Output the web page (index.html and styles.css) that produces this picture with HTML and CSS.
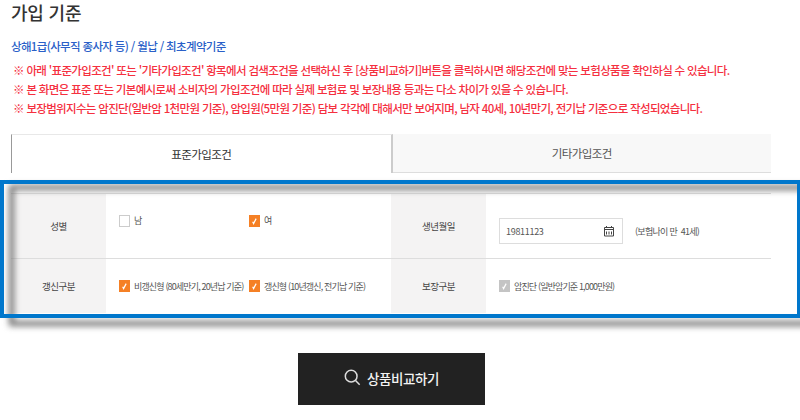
FILE: index.html
```html
<!DOCTYPE html>
<html lang="ko">
<head>
  <meta charset="UTF-8">
  <title>가입 기준</title>
  <link rel="stylesheet" href="styles.css">
</head>
<body>

<div class="page">
  <h2 class="title">가입 기준</h2>
  <p class="subtitle">상해1급(사무직 종사자 등) / 월납 / 최초계약기준</p>

  <ul class="notice">
    <li>※ 아래 '표준가입조건' 또는 '기타가입조건' 항목에서 검색조건을 선택하신 후 [상품비교하기]버튼을 클릭하시면 해당조건에 맞는 보험상품을 확인하실 수 있습니다.</li>
    <li>※ 본 화면은 표준 또는 기본예시로써 소비자의 가입조건에 따라 실제 보험료 및 보장내용 등과는 다소 차이가 있을 수 있습니다.</li>
    <li>※ 보장범위지수는 암진단(일반암 1천만원 기준), 암입원(5만원 기준) 담보 각각에 대해서만 보여지며, 남자 40세, 10년만기, 전기납 기준으로 작성되었습니다.</li>
  </ul>

  <div class="tabs">
    <div class="tab active">표준가입조건</div>
    <div class="tab">기타가입조건</div>
  </div>

  <div class="form">
    <div class="label">성별</div>
    <div class="cell cell-gender">
      <div class="option"><span class="check"></span>남</div>
      <div class="option"><span class="check on"><svg viewBox="0 0 12 12"><path d="M4 6.8 5 8.8 7.8 3.4" /></svg></span>여</div>
    </div>
    <div class="label">생년월일</div>
    <div class="cell cell-date">
      <div class="date-input">
        <span>19811123</span>
        <svg class="calendar" viewBox="0 0 12 12">
          <path d="M1.5 2.5h9v8.5h-9z M1.5 4.5h9 M3.5 1v2 M8.5 1v2" />
          <path d="M3.5 6.5v3 M6 6.5v3 M8.5 6.5v3" />
        </svg>
      </div>
      <span class="age">(보험나이 만&nbsp; 41세)</span>
    </div>

    <div class="label line">갱신구분</div>
    <div class="cell line cell-renew">
      <div class="option"><span class="check on"><svg viewBox="0 0 12 12"><path d="M4 6.8 5 8.8 7.8 3.4" /></svg></span>비갱신형 (80세만기, 20년납 기준)</div>
      <div class="option"><span class="check on"><svg viewBox="0 0 12 12"><path d="M4 6.8 5 8.8 7.8 3.4" /></svg></span>갱신형 (10년갱신, 전기납 기준)</div>
    </div>
    <div class="label line">보장구분</div>
    <div class="cell line cell-cover">
      <div class="option"><span class="check off"><svg viewBox="0 0 12 12"><path d="M4 6.8 5 8.8 7.8 3.4" /></svg></span>암진단 (일반암기준 1,000만원)</div>
    </div>
  </div>

  <button class="search-btn">
    <svg viewBox="0 0 18 18"><circle cx="7.6" cy="7.6" r="6.2" /><path d="M12.2 12.2 16.6 16.6" /></svg>
    상품비교하기
  </button>
</div>

<div class="focus-shadow"></div>
<div class="focus-box"></div>

</body>
</html>
```

FILE: styles.css
```css
* {
  box-sizing: border-box;
}

html, body {
  height: 420px;
  overflow: hidden;
}

body {
  margin: 0;
  background: #fff;
  color: #333;
  font-family: "Noto Sans CJK KR", "Noto Sans", sans-serif;
  position: relative;
}

.page {
  width: 760px;
  margin-left: 11px;
}

.title {
  margin: 0;
  height: 25px;
  font-size: 18px;
  font-weight: 500;
  line-height: 25px;
  letter-spacing: -0.2px;
  color: #333;
}

.subtitle {
  margin: 12px 0 0;
  height: 18px;
  font-size: 11.5px;
  font-weight: 500;
  line-height: 18px;
  letter-spacing: -0.65px;
  color: #2a5fc8;
}

.notice {
  list-style: none;
  margin: 6px 0 0;
  padding: 0 0 0 2px;
  font-size: 11.5px;
  font-weight: 500;
  line-height: 19px;
  letter-spacing: -0.67px;
  color: #f5303f;
  white-space: nowrap;
}

.tabs {
  display: flex;
  margin-top: 16px;
  height: 39px;
}

.tab {
  flex: 1;
  display: flex;
  align-items: center;
  justify-content: center;
  font-size: 11.5px;
  letter-spacing: -0.6px;
  color: #555;
  background: #f8f8f8;
  border-bottom: 1px solid #ddd;
}

.tab.active {
  background: #fff;
  color: #333;
  border: 1px solid #e8e8e8;
  border-left-color: #999;
  border-right: 2px solid #ccc;
  border-bottom: 0;
}

.form {
  display: grid;
  grid-template-columns: 95px 285px 95px 285px;
  grid-template-rows: 64px 55px;
  margin-top: 20px;
  border-top: 1px solid #ddd;
}

.label {
  display: flex;
  align-items: center;
  justify-content: center;
  background: #f4f3f3;
  font-size: 9.5px;
  letter-spacing: -0.5px;
  color: #444;
}

.line {
  border-top: 1px solid #ddd;
}

.cell {
  display: flex;
  align-items: center;
  padding-left: 13px;
  font-size: 9px;
  letter-spacing: -0.85px;
  color: #555;
}

.option {
  display: flex;
  align-items: center;
  white-space: nowrap;
}

.cell-gender {
  align-items: flex-start;
  padding-top: 20px;
}

.cell-gender .option {
  width: 130px;
}

.cell-renew .option:first-child {
  width: 130px;
}

.cell-date {
  padding-top: 10px;
}

.check {
  flex: none;
  width: 11px;
  height: 12px;
  margin-right: 4px;
  background: #fff;
  border: 1px solid #ccc;
}

.check svg {
  display: block;
  width: 100%;
  height: 100%;
  fill: none;
  stroke: #fff;
  stroke-width: 1.3;
}

.check.on {
  background: #f58025;
  border: 0;
}

.check.off {
  background: #c4c4c4;
  border: 0;
}

.date-input {
  display: flex;
  align-items: center;
  justify-content: space-between;
  width: 124px;
  height: 26px;
  padding: 0 7px 0 6px;
  border: 1px solid #ddd;
  letter-spacing: -0.3px;
}

.calendar {
  width: 12px;
  height: 12px;
  fill: none;
  stroke: #444;
  stroke-width: 1;
}

.age {
  margin-left: 12px;
  letter-spacing: -0.7px;
}

.search-btn {
  display: flex;
  align-items: center;
  justify-content: center;
  gap: 6px;
  width: 187px;
  height: 52px;
  margin: 40px 0 0 287px;
  padding: 0 0 3px;
  border: 0;
  background: #222;
  color: #f2f2f2;
  font-family: inherit;
  font-size: 13.5px;
  font-weight: 500;
  letter-spacing: -0.4px;
}

.search-btn svg {
  width: 17px;
  height: 17px;
  fill: none;
  stroke: #ddd;
  stroke-width: 1.6;
}

/* annotation drawn over the form */
.focus-box {
  position: absolute;
  left: 0;
  top: 180px;
  width: 800px;
  height: 138px;
  border: 4px solid #0077cc;
  border-right-width: 3px;
}

.focus-shadow {
  position: absolute;
  left: 9px;
  top: 185px;
  width: 815px;
  height: 141px;
  border: 5px solid #707070;
  filter: blur(3px);
}
```
